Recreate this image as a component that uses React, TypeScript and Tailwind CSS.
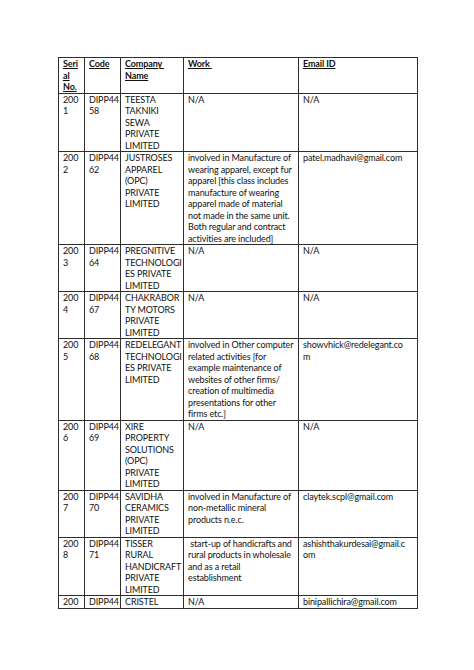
const headers = [["Seri", "al", "No."], ["Code"], ["Company ", "Name"], ["Work "], ["Email ID"]];

const rows: string[][][] = [
  [["200", "1"], ["DIPP44", "58"], ["TEESTA", "TAKNIKI", "SEWA", "PRIVATE", "LIMITED"], ["N/A"], ["N/A"]],
  [
    ["200", "2"],
    ["DIPP44", "62"],
    ["JUSTROSES", "APPAREL", "(OPC)", "PRIVATE", "LIMITED"],
    [
      "involved in Manufacture of",
      "wearing apparel, except fur",
      "apparel [this class includes",
      "manufacture of wearing",
      "apparel made of material",
      "not made in the same unit.",
      "Both regular and contract",
      "activities are included]",
    ],
    ["patel.madhavi@gmail.com"],
  ],
  [["200", "3"], ["DIPP44", "64"], ["PREGNITIVE", "TECHNOLOGI", "ES PRIVATE", "LIMITED"], ["N/A"], ["N/A"]],
  [["200", "4"], ["DIPP44", "67"], ["CHAKRABOR", "TY MOTORS", "PRIVATE", "LIMITED"], ["N/A"], ["N/A"]],
  [
    ["200", "5"],
    ["DIPP44", "68"],
    ["REDELEGANT", "TECHNOLOGI", "ES PRIVATE", "LIMITED"],
    [
      "involved in Other computer",
      "related activities [for",
      "example maintenance of",
      "websites of other firms/",
      "creation of multimedia",
      "presentations for other",
      "firms etc.]",
    ],
    ["showvhick@redelegant.co", "m"],
  ],
  [["200", "6"], ["DIPP44", "69"], ["XIRE", "PROPERTY", "SOLUTIONS", "(OPC)", "PRIVATE", "LIMITED"], ["N/A"], ["N/A"]],
  [
    ["200", "7"],
    ["DIPP44", "70"],
    ["SAVIDHA", "CERAMICS", "PRIVATE", "LIMITED"],
    ["involved in Manufacture of", "non-metallic mineral", "products n.e.c."],
    ["claytek.scpl@gmail.com"],
  ],
  [
    ["200", "8"],
    ["DIPP44", "71"],
    ["TISSER", "RURAL", "HANDICRAFT", "PRIVATE", "LIMITED"],
    ["\u00a0start-up of handicrafts and", "rural products in wholesale", "and as a retail", "establishment"],
    ["ashishthakurdesai@gmail.c", "om"],
  ],
  [["200"], ["DIPP44"], ["CRISTEL"], ["N/A"], ["binipallichira@gmail.com"]],
];

const Cell = ({ lines, head }: { lines: string[]; head?: boolean }) => (
  <div className="border-r border-b border-[#2e2e2e] pl-[4px] pr-[1px] overflow-hidden">
    {lines.map((l, i) => (
      <div
        key={i}
        className={`whitespace-pre leading-[11.5px] tracking-[-0.12px] ${head ? "font-bold underline" : ""}`}
      >
        {l}
      </div>
    ))}
  </div>
);

export default function App() {
  return (
    <div className="w-[474px] h-[670px] bg-white overflow-hidden pt-[57px] pl-[58px]">
      <div
        className="grid grid-cols-[26px_36px_63px_115px_119px] border-l border-t border-[#2e2e2e] w-fit text-[9px] text-[#111]"
        style={{ fontFamily: "Lato, 'Open Sans', sans-serif" }}
      >
        {headers.map((h, i) => (
          <Cell key={"h" + i} lines={h} head />
        ))}
        {rows.map((r, ri) => r.map((c, ci) => <Cell key={ri + "-" + ci} lines={c} />))}
      </div>
    </div>
  );
}
